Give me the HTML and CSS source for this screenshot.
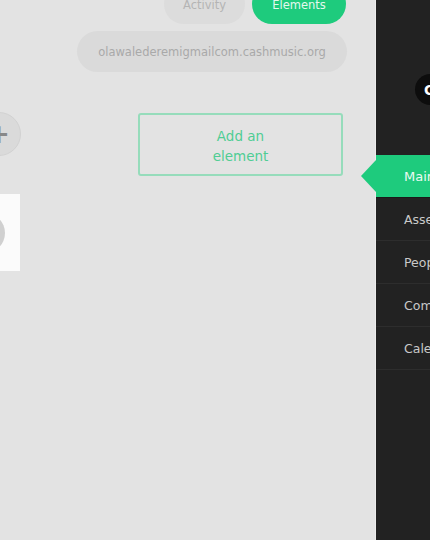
FILE: index.html
```html
<!DOCTYPE html>
<html>
<head>
  <meta name="viewport" content="width=device-width, initial-scale=1">
  <link rel="stylesheet" href="styles.css">
</head>
<body>
  <div class="page">
    <div class="main">
      <div class="tabs">
        <div class="tab">Activity</div>
        <div class="tab active">Elements</div>
      </div>
      <div class="email">olawalederemigmailcom.cashmusic.org</div>
      <div class="row">
        <div class="add-circle">+</div>
        <div class="add-element">Add an<br>element</div>
      </div>
      <div class="card">
        <div class="card-dot"></div>
      </div>
    </div>

    <div class="sidebar">
      <div class="user-pill">Cash</div>
      <ul class="nav">
        <li class="nav-item active">Main</li>
        <li class="nav-item">Assets</li>
        <li class="nav-item">People</li>
        <li class="nav-item">Commerce</li>
        <li class="nav-item">Calendar</li>
      </ul>
    </div>
  </div>
</body>
</html>
```

FILE: styles.css
```css
    html, body {
      margin: 0;
      padding: 0;
      overflow: hidden;
      background-color: #e3e3e3;
      font-family: "DejaVu Sans", Arial, sans-serif;
    }
    .page {
      display: flex;
      width: 430px;
      height: 540px;
    }
    .main {
      width: 376px;
      flex-shrink: 0;
      height: 540px;
      overflow: hidden;
      border-right: 1px solid #ececec;
      box-sizing: border-box;
    }
    .tabs {
      display: flex;
      justify-content: flex-end;
      gap: 7px;
      margin-top: -16px;
      padding-right: 29px;
    }
    .tab {
      height: 40px;
      border-radius: 20px;
      display: flex;
      align-items: center;
      justify-content: center;
      font-size: 11.5px;
      padding-top: 1px;
      box-sizing: border-box;
    }
    .tab:first-child {
      width: 81px;
      background-color: #dcdcdc;
      color: #b4b4b4;
    }
    .tab.active {
      width: 94px;
      background-color: #1ecb7d;
      color: #e4f8ee;
    }
    .email {
      margin: 7px 0 0 77px;
      width: 270px;
      height: 41px;
      border-radius: 21px;
      background-color: #dadada;
      color: #a9a9a9;
      font-size: 11.5px;
      display: flex;
      align-items: center;
      justify-content: center;
    }
    .row {
      display: flex;
      align-items: flex-start;
      margin-top: 41px;
    }
    .add-circle {
      width: 44px;
      height: 44px;
      margin-left: -23px;
      margin-top: -1px;
      border-radius: 50%;
      background-color: #dadada;
      color: #888;
      font-size: 26px;
      font-weight: bold;
      display: flex;
      align-items: center;
      justify-content: center;
      box-sizing: border-box;
      border: 1px solid #d2d2d2;
    }
    .add-element {
      margin-left: auto;
      margin-right: 32px;
      width: 205px;
      height: 63px;
      box-sizing: border-box;
      border: 2px solid #96dcbb;
      border-radius: 3px;
      color: #4fcd94;
      font-size: 13.5px;
      line-height: 20px;
      text-align: center;
      display: flex;
      align-items: center;
      justify-content: center;
      padding-top: 2px;
    }
    .card {
      margin: 18px 0 0 -60px;
      width: 80px;
      height: 77px;
      background-color: #fbfbfb;
      display: flex;
      align-items: center;
      justify-content: flex-end;
    }
    .card-dot {
      width: 40px;
      height: 40px;
      border-radius: 50%;
      background-color: #d0d0d0;
      margin-right: 15px;
    }
    .sidebar {
      flex: 1;
      background-color: #222;
      padding-top: 74px;
      color: #c9c9c9;
    }
    .user-pill {
      margin-left: 39px;
      width: 120px;
      height: 31px;
      border-radius: 16px;
      background-color: #0d0d0d;
      color: #fff;
      font-weight: bold;
      font-size: 14px;
      display: flex;
      align-items: center;
      padding-left: 9px;
      box-sizing: border-box;
    }
    .nav {
      list-style: none;
      margin: 50px 0 0 0;
      padding: 0;
    }
    .nav-item {
      position: relative;
      height: 43px;
      box-sizing: border-box;
      border-bottom: 1px solid #2d2d2d;
      padding-left: 28px;
      font-size: 12.5px;
      display: flex;
      align-items: center;
      white-space: nowrap;
    }
    .nav-item.active {
      background-color: #1ecb7d;
      color: #eafaf2;
      border-bottom-color: #1a1a1a;
      font-size: 13px;
    }
    .nav-item.active::before {
      content: "";
      position: absolute;
      left: -15px;
      top: 50%;
      margin-top: -16px;
      border-top: 16px solid transparent;
      border-bottom: 16px solid transparent;
      border-right: 15px solid #1ecb7d;
    }
```
